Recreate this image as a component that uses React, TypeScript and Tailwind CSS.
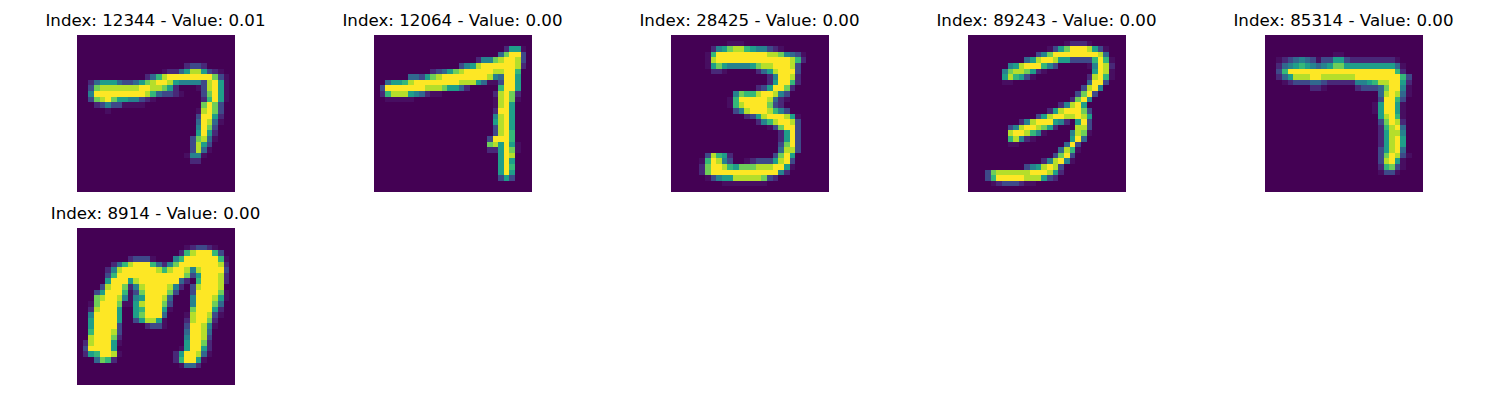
import React from 'react';

type Row = [number, number, string];

// viridis steps, ',' is the faint halo just above the background
const LEVELS: Record<string, string> = {
  ',': '#470e61',
  '1': '#482878',
  '2': '#3e4989',
  '3': '#31688e',
  '4': '#26828e',
  '5': '#1f9e89',
  '6': '#35b779',
  '7': '#6ece58',
  '8': '#b5de2b',
  '9': '#fde725',
};

// each row: [row, first column, values], '.' leaves the background showing
const SAMPLES: { title: string; rows: Row[] }[] = [
  {
    title: 'Index: 12344 - Value: 0.01',
    rows: [
      [5, 19, '1221'],
      [6, 15, ',113588521,'],
      [7, 12, '13689999999972,'],
      [8, 2, '135553223578998544442895,'],
      [9, 2, '2788888889988751...,2895,'],
      [10, 2, '4999999999863221,'],
      [10, 22, '2795,'],
      [11, 2, '27897554421,'],
      [11, 22, '1695,'],
      [12, 3, '12422,,,,'],
      [12, 22, '7972'],
      [13, 5, ','],
      [13, 21, ',8972'],
      [14, 21, '29951'],
      [15, 21, '3983,'],
      [16, 21, '4972'],
      [17, 21, '5951'],
      [18, 20, '2783,'],
      [19, 20, '2852'],
      [20, 20, '283,'],
      [21, 19, ',44,'],
      [22, 20, '11'],
    ],
  },
  {
    title: 'Index: 12064 - Value: 0.00',
    rows: [
      [2, 23, '155,'],
      [3, 22, '37992'],
      [4, 18, '144789982'],
      [5, 15, '245899999981'],
      [6, 10, '1235789999988996'],
      [7, 6, '33257899999999843995'],
      [8, 2, '355689999999988853,,2995'],
      [9, 1, '2999999988875531'],
      [9, 22, '6995'],
      [10, 1, '168885431,,'],
      [10, 21, '18971'],
      [11, 2, ',,,,,'],
      [11, 21, ',897,'],
      [12, 21, ',895'],
      [13, 21, '1995'],
      [14, 21, '4895'],
      [15, 21, '5895'],
      [16, 21, '2895'],
      [17, 21, '2896'],
      [18, 20, '29996'],
      [19, 20, '78595,'],
      [20, 20, '11597,'],
      [21, 22, '598'],
      [22, 22, '595'],
      [23, 22, '596'],
      [24, 22, '595'],
      [25, 22, '252'],
    ],
  },
  {
    title: 'Index: 28425 - Value: 0.00',
    rows: [
      [1, 10, ',,,'],
      [2, 7, '145788654421,'],
      [3, 6, ',6999999999887432,'],
      [4, 6, ',89999999999999861'],
      [5, 6, ',5754444578899982'],
      [6, 7, '11,.....13589992'],
      [7, 17, '149981'],
      [8, 17, '159961'],
      [9, 15, '1259971'],
      [10, 11, '4766899842'],
      [11, 10, ',699999831,'],
      [12, 10, ',689999721'],
      [13, 11, '2489998642'],
      [14, 13, '125899985,'],
      [15, 15, '14689982'],
      [16, 17, ',27992'],
      [17, 19, '1592'],
      [18, 19, '1592'],
      [19, 19, '2792'],
      [20, 19, '3882'],
      [21, 6, '28651'],
      [21, 18, '2795'],
      [22, 5, ',69842'],
      [22, 13, ',12225892'],
      [23, 5, '1799865777888995,'],
      [24, 5, '1799999999999941'],
      [25, 6, ',245588888721'],
      [26, 9, ',,,,,,,,'],
    ],
  },
  {
    title: 'Index: 89243 - Value: 0.00',
    rows: [
      [1, 17, ',111,'],
      [2, 14, ',257999852,'],
      [3, 12, '2479999999983'],
      [4, 10, '358998552222696,'],
      [5, 7, '458999642'],
      [5, 21, ',4981'],
      [6, 6, '4788751,'],
      [6, 22, '598,'],
      [7, 6, '58652,'],
      [7, 21, '1896,'],
      [8, 6, ',,'],
      [8, 21, '3992'],
      [9, 20, '2894'],
      [10, 19, '2792'],
      [11, 18, '1794'],
      [12, 16, '14895'],
      [13, 14, '15899972'],
      [14, 12, '2589988985'],
      [15, 9, '148999541'],
      [15, 19, '592'],
      [16, 7, '248998751'],
      [16, 19, '882'],
      [17, 7, '899864,'],
      [17, 18, '487,'],
      [18, 7, '6841,'],
      [18, 18, '593'],
      [19, 7, ',,'],
      [19, 17, '392'],
      [20, 16, '386,'],
      [21, 15, '2792'],
      [22, 13, '14894,'],
      [23, 10, '2458982'],
      [24, 3, '27888888999851'],
      [25, 3, '2699999888521'],
      [26, 4, ',12221,,'],
    ],
  },
  {
    title: 'Index: 85314 - Value: 0.00',
    rows: [
      [3, 12, ',,'],
      [4, 2, ',123432,2255211111111,'],
      [5, 2, '1345654345775555555553,'],
      [6, 2, '26999999999999999999961'],
      [7, 2, '135888998888889999999962'],
      [8, 3, ',1222332111114456889951'],
      [9, 8, '11,'],
      [9, 16, '122237994,'],
      [10, 20, '38983,'],
      [11, 20, '29962'],
      [12, 19, ',5995,'],
      [13, 19, ',5995,'],
      [14, 20, '5896,'],
      [15, 20, '27981'],
      [16, 20, '16893'],
      [17, 20, '15884'],
      [18, 20, '15895'],
      [19, 20, '15895'],
      [20, 20, '25893'],
      [21, 20, '27982,'],
      [22, 20, '2895,'],
      [23, 20, '1672,'],
      [24, 20, ',22,'],
    ],
  },
  {
    title: 'Index: 8914 - Value: 0.00',
    rows: [
      [3, 19, ',1221,'],
      [4, 18, '16899962'],
      [5, 9, '1222,'],
      [5, 17, '469999996,'],
      [6, 6, '136899963147999999981'],
      [7, 5, '1489999998689984899992'],
      [8, 5, '2699999999999972599981'],
      [9, 5, '59995899999993 1.699981'.replace(' ', '')],
      [10, 4, '28997148999984 1.289998'.replace(' ', '')],
      [11, 3, '259996,27999972'],
      [11, 20, '299997,'],
      [12, 3, '789984,4599983'],
      [12, 20, '499985,'],
      [13, 2, ',79997,,5899972'],
      [13, 20, '499973'],
      [14, 2, '189995..569995,'],
      [14, 20, '799951'],
      [15, 2, '499995..579993'],
      [15, 19, ',89982,'],
      [16, 2, '599995..25885,'],
      [16, 19, '189971'],
      [17, 2, '599992'],
      [17, 12, '122,'],
      [17, 19, '29984,'],
      [18, 2, '699982'],
      [18, 19, '39983'],
      [19, 2, '899971'],
      [19, 19, '49982'],
      [20, 1, '189995,'],
      [20, 19, '59971'],
      [21, 1, '299995'],
      [21, 18, ',59951'],
      [22, 1, '156998,'],
      [22, 17, '159983,'],
      [23, 3, '3761'],
      [23, 17, '16995,'],
      [24, 18, ',331'],
    ],
  },
];

const DigitImage: React.FC<{ rows: Row[] }> = ({ rows }) => (
  <svg viewBox="0 0 28 28" preserveAspectRatio="none" shapeRendering="crispEdges" className="block w-[158px] h-[157px] bg-[#440154]">
    {rows.flatMap(([row, col, values]) =>
      values.split('').map((v, i) =>
        LEVELS[v] ? <rect key={`${row}-${col + i}`} x={col + i} y={row} width={1} height={1} fill={LEVELS[v]} /> : null
      )
    )}
  </svg>
);

export default function App() {
  return (
    <div className="w-[1500px] h-[400px] bg-white overflow-hidden pl-[7px] font-['DejaVu_Sans',sans-serif]">
      <div className="grid grid-cols-[repeat(5,297px)] auto-rows-[193px]">
        {SAMPLES.map((s) => (
          <div key={s.title} className="flex flex-col items-center justify-end h-[192px]">
            <h3 className="text-[16.67px] leading-[20px] mb-[4px] text-black whitespace-nowrap">{s.title}</h3>
            <DigitImage rows={s.rows} />
          </div>
        ))}
      </div>
    </div>
  );
}
